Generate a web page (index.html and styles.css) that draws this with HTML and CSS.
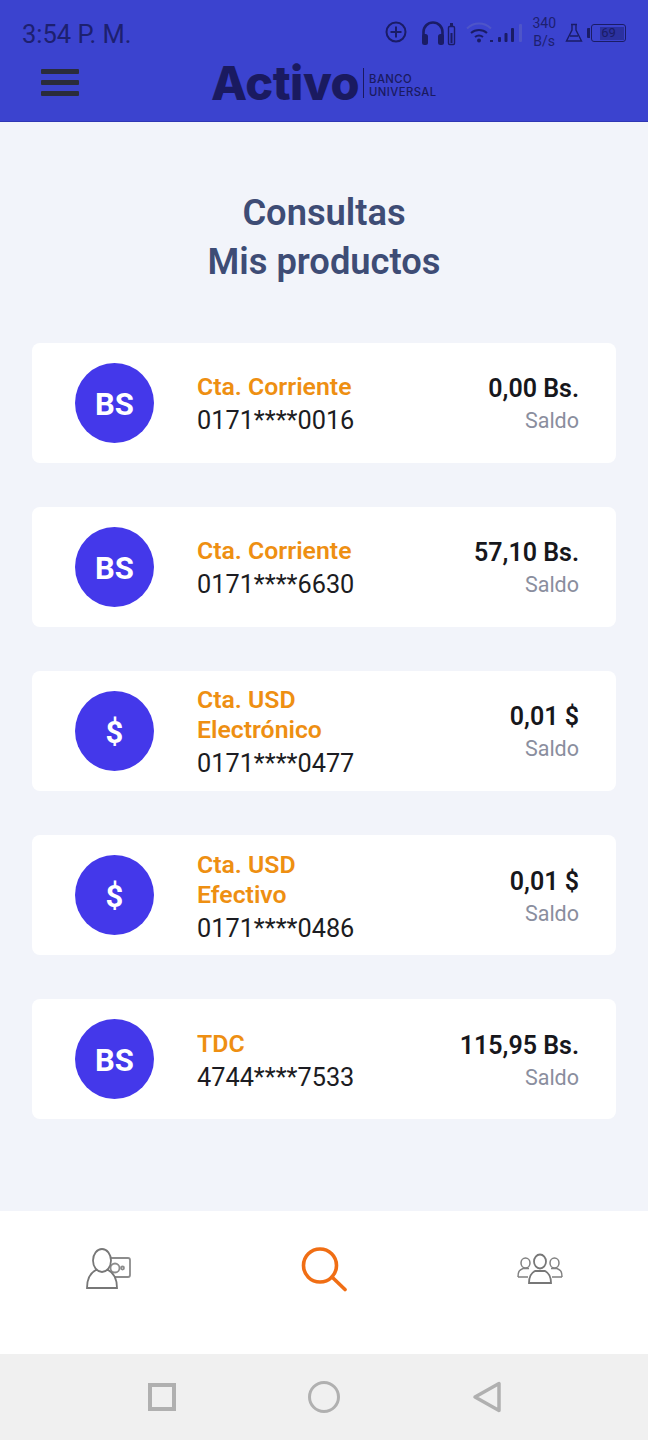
FILE: index.html
```html
<!DOCTYPE html>
<html lang="es">
<head>
<meta charset="utf-8">
<title>Mis productos</title>
<link rel="stylesheet" href="styles.css">
</head>
<body>
<div class="screen">
  <header class="header">
    <div class="status">
      <span class="time">3:54 P. M.</span>
      <div class="status-icons">
        <svg class="ic-plus" width="24" height="24" viewBox="0 0 24 24"><circle cx="12" cy="12" r="9.5"/><path d="M12 6.5v11M6.5 12h11"/></svg>
        <svg class="ic-head" width="36" height="26" viewBox="0 0 36 26"><path class="line" d="M2.5 19v-7a9.5 9.500 0 0 1 19 0v7"/><rect class="fill" x="1" y="14" width="6" height="11" rx="2.5"/><rect class="fill" x="17" y="14" width="6" height="11" rx="2.5"/><rect class="bat" x="27.5" y="6.5" width="6" height="18" rx="1.2"/><rect class="fill" x="29" y="3" width="3" height="3"/><rect class="fill" x="29.5" y="13" width="2" height="10"/></svg>
        <svg class="ic-wifi" width="58" height="26" viewBox="0 0 58 26"><path class="w1" d="M1 8.500a17 17 0 0 1 24 0"/><path class="w2" d="M5 13a12 12 0 0 1 16 0"/><path class="w2" d="M9 17a6.500 6.500 0 0 1 8 0"/><circle class="dot" cx="13" cy="20.500" r="2"/><rect class="dot" x="24" y="20" width="3" height="2"/><rect class="dot" x="32" y="17" width="3" height="5" rx="1"/><rect class="dot" x="38.500" y="13" width="3" height="9" rx="1"/><rect class="dot" x="45" y="8" width="3" height="14" rx="1"/><rect class="off" x="53" y="4" width="3" height="18" rx="1"/></svg>
        <span class="speed"><span>340</span><span>B/s</span></span>
        <svg class="ic-flask" width="18" height="20" viewBox="0 0 18 20"><path d="M6 1.500h6M7 2v5L1.500 18h15L11 7V2M5 13h8"/></svg>
        <div class="battery"><span class="bat-nub"></span><span class="bat-body"><span class="bat-level"></span><span class="bat-num">69</span></span></div>
      </div>
    </div>
    <div class="appbar">
      <div class="burger"><span></span><span></span><span></span></div>
      <div class="logo">
        <span class="logo-word">Activo</span>
        <span class="logo-sub"><span>BANCO</span><span>UNIVERSAL</span></span>
      </div>
    </div>
  </header>

  <main class="main">
    <h1 class="title">Consultas<br>Mis productos</h1>
    <section class="cards">
      <article class="card">
        <div class="avatar">BS</div>
        <div class="info"><div class="name">Cta. Corriente</div><div class="num">0171****0016</div></div>
        <div class="balance"><div class="amount">0,00 Bs.</div><div class="label">Saldo</div></div>
      </article>
      <article class="card">
        <div class="avatar">BS</div>
        <div class="info"><div class="name">Cta. Corriente</div><div class="num">0171****6630</div></div>
        <div class="balance"><div class="amount">57,10 Bs.</div><div class="label">Saldo</div></div>
      </article>
      <article class="card">
        <div class="avatar">$</div>
        <div class="info"><div class="name">Cta. USD<br>Electrónico</div><div class="num">0171****0477</div></div>
        <div class="balance"><div class="amount">0,01 $</div><div class="label">Saldo</div></div>
      </article>
      <article class="card">
        <div class="avatar">$</div>
        <div class="info"><div class="name">Cta. USD<br>Efectivo</div><div class="num">0171****0486</div></div>
        <div class="balance"><div class="amount">0,01 $</div><div class="label">Saldo</div></div>
      </article>
      <article class="card">
        <div class="avatar">BS</div>
        <div class="info"><div class="name">TDC</div><div class="num">4744****7533</div></div>
        <div class="balance"><div class="amount">115,95 Bs.</div><div class="label">Saldo</div></div>
      </article>
    </section>
  </main>

  <nav class="tabs">
    <svg class="tab-ic tab-person" width="48" height="44" viewBox="0 0 48 44"><rect class="thin" x="24" y="12" width="22" height="19" rx="2"/><circle class="thin" cx="31" cy="22" r="4.500"/><circle class="thin" cx="38.500" cy="22" r="1.500"/><path class="bg" d="M3 42c0-10 3-15 9-18h12c6 3 9 8 9 18z"/><ellipse class="bg" cx="18" cy="14.500" rx="9" ry="11.500"/></svg>
    <svg class="tab-search" width="48" height="46" viewBox="0 0 48 46"><circle cx="20" cy="19.500" r="16.500"/><path d="M32 31l13 12.500"/></svg>
    <svg class="tab-ic tab-group" width="48" height="32" viewBox="0 0 48 32"><ellipse cx="9.500" cy="10" rx="4.500" ry="5"/><path d="M2 24c0-5 1-7 5-8.500h6"/><ellipse cx="38.500" cy="10" rx="4.500" ry="5"/><path d="M46 24c0-5-1-7-5-8.500h-6"/><path d="M2 24h10M36 24h10"/><path class="bg" d="M13 30c0-7 2-10 6-12h10c4 2 6 5 6 12z"/><ellipse class="bg" cx="24" cy="8.500" rx="6" ry="7"/></svg>
  </nav>

  <footer class="sysnav">
    <span class="sys-square"></span>
    <span class="sys-circle"></span>
    <svg class="sys-back" width="30" height="32" viewBox="0 0 30 32"><path d="M27 2.500v27L3 16z"/></svg>
  </footer>
</div>
</body>
</html>
```

FILE: styles.css
```css
* { box-sizing: border-box; }
html, body { margin: 0; padding: 0; }
body { font-family: Roboto, "Liberation Sans", sans-serif; background: #f2f4fa; }
.screen { width: 648px; height: 1440px; display: flex; flex-direction: column; overflow: hidden; }

.header { height: 122px; background: #3b43cf; border-bottom: 1px solid #2f36b4; flex: none; color: #1a1c66; }
.status { display: flex; justify-content: space-between; align-items: center; height: 50px; padding: 17px 22px 0 22px; }
.time { font-size: 25.5px; color: #1d2070; }
.status-icons { display: flex; align-items: center; margin-top: -1px; }
.ic-plus { margin-right: 13px; margin-top: -2px; }
.ic-plus circle, .ic-plus path { fill: none; stroke: #1a1c66; stroke-width: 2; }
.ic-head { margin-right: 9px; }
.ic-head .line { fill: none; stroke: #1a1c66; stroke-width: 2.6; }
.ic-head .fill { fill: #1a1c66; }
.ic-head .bat { fill: none; stroke: #1a1c66; stroke-width: 1.4; }
.ic-wifi .w1 { fill: none; stroke: #4e55c9; stroke-width: 2; }
.ic-wifi .w2 { fill: none; stroke: #1a1c66; stroke-width: 2; }
.ic-wifi .dot { fill: #1a1c66; }
.ic-wifi .off { fill: #4e55c9; }
.ic-wifi { margin-right: 8px; }
.speed { display: flex; flex-direction: column; align-items: center; font-size: 14px; line-height: 18px; color: #1d2070; margin-right: 9px; margin-top: -3px; }
.ic-flask { margin-right: 4px; }
.ic-flask path { fill: none; stroke: #1a1c66; stroke-width: 1.4; }
.battery { display: flex; align-items: center; }
.bat-nub { width: 3px; height: 10px; background: #1a1c66; border-radius: 1px 0 0 1px; margin-right: 1px; }
.bat-body { position: relative; display: block; width: 35px; height: 18px; border: 1.500px solid #1a1c66; border-radius: 3px; }
.bat-level { position: absolute; right: 1.500px; top: 1.500px; bottom: 1.500px; width: 24px; background: #2b319f; }
.bat-num { position: absolute; left: 0; right: 0; top: 0; text-align: center; font-size: 13px; line-height: 15px; color: #1a1c66; }

.appbar { display: flex; align-items: center; height: 71px; padding: 0 0 2px 41px; }
.burger { width: 38px; display: flex; flex-direction: column; gap: 6px; margin-top: -5px; }
.burger span { display: block; height: 5px; border-radius: 1px; background: #2a2c3c; }
.logo { display: flex; align-items: center; margin-left: 132px; margin-top: -4px; }
.logo-word { font-family: Inter, "Open Sans", sans-serif; font-weight: 800; font-size: 47px; line-height: 30px; letter-spacing: -0.5px; color: #1a1a60; padding-right: 4px; border-right: 1px solid #1a1a60; }
.logo-sub { display: flex; flex-direction: column; font-family: Inter, "Open Sans", sans-serif; font-size: 11.300px; line-height: 12.500px; font-weight: 500; letter-spacing: 0.4px; color: #1a1a60; padding-left: 5px; margin-top: 6px; }

.main { flex: 1; display: flex; flex-direction: column; align-items: center; background: #f2f4fa; }
.title { margin: 66px 0 56.700px; font-size: 36.300px; line-height: 49px; font-weight: 600; color: #3e4c75; text-align: center; }
.cards { display: flex; flex-direction: column; gap: 44.150px; width: 584px; }
.card { height: 120px; background: #fff; border-radius: 8px; display: flex; align-items: center; padding: 0 37px 0 43px; }
.avatar { width: 79px; height: 80px; border-radius: 50%; background: #4438ea; color: #fff; display: flex; align-items: center; justify-content: center; font-size: 31px; font-weight: 700; flex: none; padding-top: 3px; }
.info { margin-left: 43px; flex: 1; margin-top: 8px; }
.name { font-size: 24.800px; line-height: 30px; font-weight: 600; color: #ee8f12; margin-top: -1px; }
.num { font-size: 25.300px; line-height: 38px; font-weight: 400; color: #1c1c22; }
.balance { text-align: right; padding-top: 5px; }
.amount { font-size: 25px; line-height: 32px; font-weight: 600; color: #17171c; }
.label { font-size: 21.500px; line-height: 32px; color: #8a8e9e; }

.tabs { flex: none; height: 143px; background: #fff; display: flex; align-items: flex-start; justify-content: space-between; padding: 0 84px; }
.tab-person { margin-top: 35px; }
.tab-group { margin-top: 42px; }
.tab-ic * { fill: none; stroke: #808080; stroke-width: 1.500; }
.tab-ic .bg { fill: #fff; stroke: #777; stroke-width: 1.800; }
.tab-ic .thin { stroke: #8c8c8c; stroke-width: 1.800; }
.tab-search { margin-top: 35px; }
.tab-search * { fill: none; stroke: #f06e14; stroke-width: 3.600; stroke-linecap: round; }

.sysnav { flex: none; height: 86px; background: #f0f0f0; display: flex; align-items: center; padding: 0 146px 0 148px; justify-content: space-between; }
.sys-square { width: 28px; height: 28px; border: 4px solid #b0b0b0; }
.sys-circle { width: 32px; height: 32px; border: 3.500px solid #b0b0b0; border-radius: 50%; margin-left: -1px; }
.sys-back path { fill: none; stroke: #b0b0b0; stroke-width: 3.500; stroke-linejoin: round; }
```
